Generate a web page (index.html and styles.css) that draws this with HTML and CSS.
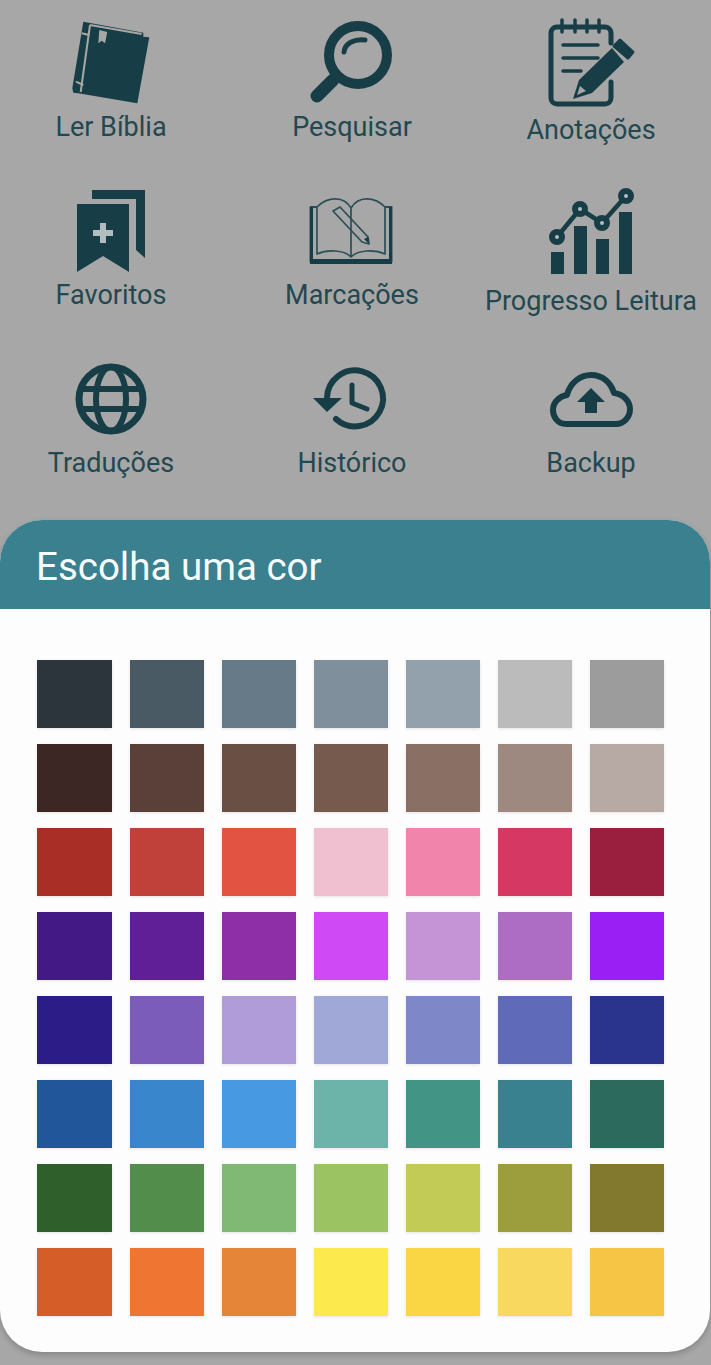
FILE: index.html
```html
<!DOCTYPE html>
<html lang="pt">
<head>
<meta charset="utf-8">
<title>Escolha uma cor</title>
<link rel="stylesheet" href="styles.css">
</head>
<body>
<main class="menu">
  <div class="item">
    <svg class="icon" viewBox="0 0 120 88">
      <polygon class="fill" points="32.3,1.7 92.3,12.7 92.3,16.7 98.3,17.3 86.3,83.3 27.3,73.3 22.3,72.7 21.3,68.3"/>
      <line class="cut-line" x1="39" y1="5" x2="29.7" y2="72"/>
      <line class="cut-line" x1="39" y1="5" x2="90.7" y2="14"/>
      <line class="cut-line" x1="30.7" y1="13.3" x2="38.3" y2="15"/>
      <line class="cut-line" x1="25" y1="61.7" x2="32.3" y2="65"/>
      <polygon class="cut" points="48.3,10 56.3,12 54,23.3 50.7,20.7 47.3,23.3"/>
    </svg>
    <span class="label">Ler Bíblia</span>
  </div>
  <div class="item">
    <svg class="icon" viewBox="0 0 120 88">
      <circle class="line" cx="66" cy="35" r="29" stroke-width="10"/>
      <line class="line" x1="41" y1="60" x2="25" y2="76" stroke-width="13"/>
      <path class="line" d="M52 32C53 23 62 19 73 20" stroke-width="5"/>
    </svg>
    <span class="label">Pesquisar</span>
  </div>
  <div class="item">
    <svg class="icon" viewBox="0 0 120 88">
      <path class="line" d="M80 62V78a6 6 0 0 1-6 6H26a6 6 0 0 1-6-6V13a6 6 0 0 1 6-6H74a6 6 0 0 1 6 6v10" stroke-width="5"/>
      <path class="line" d="M31 0V12M44 0V12M56 0V12M68 0V12M32 25H67M32 38H67M32 51H50" stroke-width="3.5"/>
      <polygon class="fill" points="42,79 48,60 81,28 93,42 61,73"/>
      <polygon class="fill round" points="89,20 102,32 97,38 83,26"/>
      <polygon class="cut" points="46,75 49,66 55,71"/>
    </svg>
    <span class="label label-low">Anotações</span>
  </div>
  <div class="item">
    <svg class="icon" viewBox="0 0 120 88">
      <polygon class="fill" points="41,2 94,2 94,70 85,62 85,11 41,11"/>
      <polygon class="fill" points="26,16 78,16 78,84 52,68 26,84"/>
      <path class="plus" d="M52 35V55M42 45H62"/>
    </svg>
    <span class="label">Favoritos</span>
  </div>
  <div class="item">
    <svg class="icon" viewBox="0 0 120 88">
      <path class="thin" d="M25 19H18.500V74H99.500V19H93" stroke-width="2"/>
      <rect class="fill" x="18" y="71" width="82" height="5"/>
      <rect class="fill" x="18" y="19" width="3" height="54"/>
      <rect class="fill" x="97" y="19" width="3" height="54"/>
      <path class="thin" d="M25 66V19C36 8 52 8 59 20V69C52 62 36 61 25 66ZM93 66V19C82 8 66 8 59 20V69C66 62 82 61 93 66Z" stroke-width="1.700"/>
      <polygon class="thin" points="41,23 48,19 76,49 77,56 70,54" stroke-width="1.800"/>
      <polygon class="fill" points="72,51 76,49 77,56"/>
    </svg>
    <span class="label">Marcações</span>
  </div>
  <div class="item">
    <svg class="icon" viewBox="0 0 120 88">
      <rect class="fill" x="20" y="64" width="13" height="22"/>
      <rect class="fill" x="43" y="38" width="13" height="48"/>
      <rect class="fill" x="65" y="51" width="13" height="35"/>
      <rect class="fill" x="88" y="24" width="13" height="62"/>
      <polyline class="line" points="26,49 49,21 71,35 95,8" stroke-width="4.500"/>
      <circle class="dot" cx="26" cy="49" r="5"/>
      <circle class="dot" cx="49" cy="21" r="5"/>
      <circle class="dot" cx="71" cy="35" r="5"/>
      <circle class="dot" cx="95" cy="8" r="5"/>
    </svg>
    <span class="label label-lower">Progresso Leitura</span>
  </div>
  <div class="item">
    <svg class="icon" viewBox="0 0 120 88">
      <circle class="line" cx="60" cy="43" r="32" stroke-width="7"/>
      <ellipse class="line" cx="60" cy="43" rx="15" ry="32" stroke-width="6"/>
      <path class="line" d="M30 33H90M30 53H90" stroke-width="6"/>
    </svg>
    <span class="label">Traduções</span>
  </div>
  <div class="item">
    <svg class="icon" viewBox="0 0 120 88">
      <path class="line" d="M35 42A28 28 0 1 1 44 63" stroke-width="6"/>
      <polygon class="fill" points="21,42 50,42 35,56"/>
      <path class="line" d="M60 29V47L75 53" stroke-width="5"/>
    </svg>
    <span class="label">Histórico</span>
  </div>
  <div class="item">
    <svg class="icon" viewBox="0 0 120 88">
      <path class="line" d="M35 68C26 68 22 60 22 54C22 45 30 40 36 39C39 27 49 19 60 19C72 19 80 27 83 37C92 38 99 45 99 53C99 62 92 68 85 68Z" stroke-width="6"/>
      <polygon class="fill" points="60,32 46,46 54,46 54,57 66,57 66,46 74,46"/>
    </svg>
    <span class="label">Backup</span>
  </div>
</main>
<section class="sheet">
  <h1 class="sheet-title">Escolha uma cor</h1>
  <div class="palette">
    <div class="swatch" style="background:#2b353b"></div><div class="swatch" style="background:#4a5a65"></div><div class="swatch" style="background:#667a88"></div><div class="swatch" style="background:#7f8f9b"></div><div class="swatch" style="background:#92a1ac"></div><div class="swatch" style="background:#bbbbbb"></div><div class="swatch" style="background:#9c9c9c"></div>
    <div class="swatch" style="background:#3c2724"></div><div class="swatch" style="background:#5b4039"></div><div class="swatch" style="background:#6a4f45"></div><div class="swatch" style="background:#775a4e"></div><div class="swatch" style="background:#8a6f65"></div><div class="swatch" style="background:#9e8981"></div><div class="swatch" style="background:#b7aaa5"></div>
    <div class="swatch" style="background:#a92e26"></div><div class="swatch" style="background:#c0403a"></div><div class="swatch" style="background:#e25342"></div><div class="swatch" style="background:#f0c0d1"></div><div class="swatch" style="background:#f084aa"></div><div class="swatch" style="background:#d63864"></div><div class="swatch" style="background:#9a1e3e"></div>
    <div class="swatch" style="background:#431a85"></div><div class="swatch" style="background:#611f97"></div><div class="swatch" style="background:#8e2fa8"></div><div class="swatch" style="background:#cf49f5"></div><div class="swatch" style="background:#c494d6"></div><div class="swatch" style="background:#ad6dc4"></div><div class="swatch" style="background:#9a1ff5"></div>
    <div class="swatch" style="background:#2c1c88"></div><div class="swatch" style="background:#7b5cba"></div><div class="swatch" style="background:#b09cd8"></div><div class="swatch" style="background:#a0a8d8"></div><div class="swatch" style="background:#7e88c8"></div><div class="swatch" style="background:#5f6bb8"></div><div class="swatch" style="background:#2b348d"></div>
    <div class="swatch" style="background:#22569a"></div><div class="swatch" style="background:#3a86cc"></div><div class="swatch" style="background:#4799e2"></div><div class="swatch" style="background:#6cb3aa"></div><div class="swatch" style="background:#429584"></div><div class="swatch" style="background:#3a8190"></div><div class="swatch" style="background:#2c6a5e"></div>
    <div class="swatch" style="background:#2f5f2b"></div><div class="swatch" style="background:#528d4c"></div><div class="swatch" style="background:#7fb974"></div><div class="swatch" style="background:#9bc361"></div><div class="swatch" style="background:#c1cb56"></div><div class="swatch" style="background:#9c9e3e"></div><div class="swatch" style="background:#82782e"></div>
    <div class="swatch" style="background:#d45d28"></div><div class="swatch" style="background:#ee7632"></div><div class="swatch" style="background:#e58538"></div><div class="swatch" style="background:#fbe94e"></div><div class="swatch" style="background:#fad544"></div><div class="swatch" style="background:#f8d85f"></div><div class="swatch" style="background:#f6c545"></div>
  </div>
</section>
</body>
</html>
```
FILE: styles.css
```css
* { box-sizing: border-box; }
html, body { margin: 0; height: 1365px; overflow: hidden; }
body {
  background: #a7a7a7;
  font-family: Roboto, "Liberation Sans", sans-serif;
}
.menu {
  display: grid;
  grid-template-columns: 222px 260px 218px;
  grid-template-rows: 168px 168px 144px;
  height: 520px;
  padding-top: 20px;
}
.item {
  display: flex;
  flex-direction: column;
  align-items: center;
}
.icon {
  display: block;
  width: 120px;
  height: 88px;
  overflow: visible;
  flex: none;
}
.label {
  margin-top: 5px;
  font-size: 27px;
  line-height: 28px;
  color: #234850;
  white-space: nowrap;
}
.label-low { margin-top: 8px; }
.label-lower { margin-top: 11px; }
.fill { fill: #173e46; }
.round { stroke: #173e46; stroke-width: 3; stroke-linejoin: round; }
.line { fill: none; stroke: #173e46; stroke-linecap: round; stroke-linejoin: round; }
.thin { fill: none; stroke: #2c5058; stroke-linejoin: round; }
.cut { fill: #a7a7a7; }
.cut-line { stroke: #a7a7a7; stroke-width: 2; }
.plus { fill: none; stroke: #b3bcbe; stroke-width: 6; }
.dot { fill: #b3bfc2; stroke: #173e46; stroke-width: 6; }
.sheet {
  width: 710px;
  height: 832px;
  border-radius: 42px;
  overflow: hidden;
  background: #fdfdfe;
  box-shadow: 0 3px 6px rgba(0, 0, 0, 0.2);
}
.sheet-title {
  margin: 0;
  height: 89px;
  padding-left: 36px;
  background: #3a808e;
  color: #f6fcfd;
  font-size: 38.5px;
  font-weight: 400;
  line-height: 94px;
}
.palette {
  display: grid;
  grid-template-columns: 75px repeat(6, 74px);
  grid-auto-rows: 68px;
  gap: 16px 18px;
  padding: 51px 0 0 37px;
}
.swatch { box-shadow: 0 1px 3px rgba(0, 0, 0, 0.1); }
```
